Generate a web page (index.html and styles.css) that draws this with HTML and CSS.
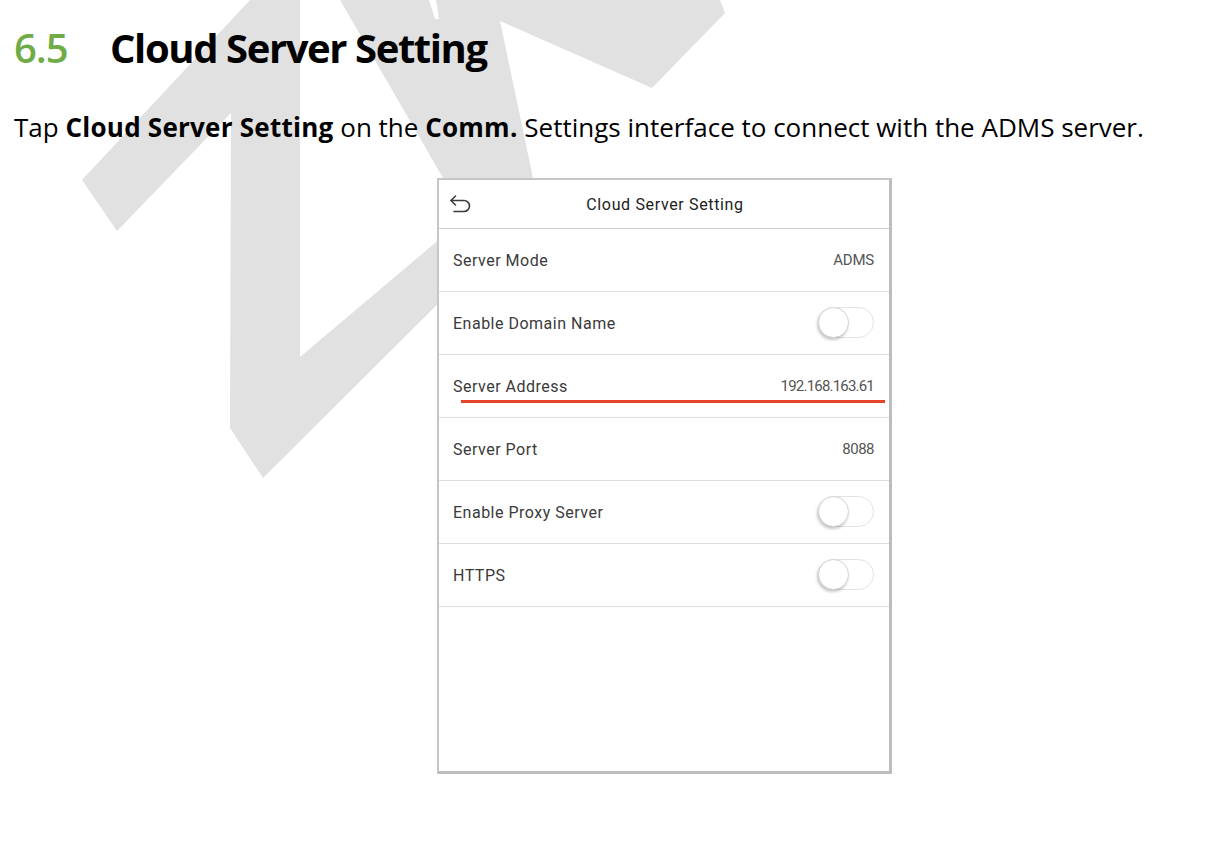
FILE: index.html
```html
<!DOCTYPE html>
<html lang="en">
<head>
<meta charset="utf-8">
<title>Cloud Server Setting</title>
<link rel="stylesheet" href="styles.css">
</head>
<body>
<svg class="watermark" width="1226" height="846" viewBox="0 0 1226 846" aria-hidden="true">
  <polygon points="250,0 300,0 300,357 480,205 480,262 263,478 230,428 231,113 117,231 82,180" />
  <polygon points="340,0 720,0 725,13 652,88 500,21 533,178 443,178" />
  <polygon class="gap" points="429,0 436,0 439,19 435,19" />
</svg>
<main class="doc">
  <h1 class="title"><span class="num">6.5</span><span class="name">Cloud Server Setting</span></h1>
  <p class="lead">Tap <b>Cloud Server Setting</b> on the <b>Comm.</b> Settings interface to connect with the ADMS server.</p>
  <section class="phone">
    <header class="bar">
      <svg class="back" width="26" height="22" viewBox="0 0 26 22" aria-hidden="true">
        <path d="M4 7.5 H17 A5.5 5.5 0 0 1 17 18.5 H7" />
        <path d="M8.5 3 L4 7.5 L8.5 12" />
      </svg>
      <span class="bar-title">Cloud Server Setting</span>
      <span></span>
    </header>
    <div class="row"><span class="label">Server Mode</span><span class="value">ADMS</span></div>
    <div class="row"><span class="label">Enable Domain Name</span><span class="toggle"></span></div>
    <div class="row"><span class="label">Server Address</span><span class="value ip">192.168.163.61</span><span class="mark"></span></div>
    <div class="row"><span class="label">Server Port</span><span class="value num-v">8088</span></div>
    <div class="row"><span class="label">Enable Proxy Server</span><span class="toggle"></span></div>
    <div class="row"><span class="label">HTTPS</span><span class="toggle"></span></div>
    <div class="blank"></div>
  </section>
</main>
</body>
</html>
```
FILE: styles.css
```css
html, body {
  margin: 0;
  padding: 0;
  background: #ffffff;
}

body {
  position: relative;
  width: 1226px;
  height: 846px;
  overflow: hidden;
  font-family: "Open Sans", "Noto Sans", sans-serif;
  color: #000;
}

.watermark {
  position: absolute;
  left: 0;
  top: 0;
  z-index: 0;
}

.watermark polygon {
  fill: #e1e1e1;
}

.watermark .gap {
  fill: #ffffff;
}

.doc {
  position: relative;
  z-index: 1;
  padding: 0 0 0 14px;
}

.title {
  margin: 0;
  padding-top: 20px;
  font-size: 40px;
  line-height: 56px;
  display: flex;
}

.title .num {
  width: 96px;
  color: #6fac46;
  font-weight: 600;
  letter-spacing: -1px;
}

.title .name {
  font-weight: 700;
  letter-spacing: -1.4px;
}

.lead {
  margin: 34px 0 0 0;
  font-size: 26px;
  line-height: 34px;
  letter-spacing: 0;
  white-space: nowrap;
}

.lead b {
  font-weight: 700;
  letter-spacing: 0.25px;
}

.phone {
  margin: 34px 0 0 423px;
  width: 450px;
  border-style: solid;
  border-color: #c6c6c6 #bdbdbd #bdbdbd #c6c6c6;
  border-width: 2px 3px 3px 2px;
  background: #fff;
  font-family: Roboto, "Liberation Sans", sans-serif;
  color: #333;
}

.bar {
  height: 48px;
  border-bottom: 1px solid #cfcfcf;
  display: grid;
  grid-template-columns: 1fr auto 1fr;
  align-items: center;
  padding: 0 0 0 8px;
}

.back {
  display: block;
}

.back path {
  fill: none;
  stroke: #3c3c3c;
  stroke-width: 1.6;
  stroke-linecap: round;
  stroke-linejoin: round;
}

.bar-title {
  font-size: 16px;
  letter-spacing: 0.65px;
  color: #222;
  margin-right: 6px;
}

.row {
  position: relative;
  height: 62px;
  border-bottom: 1px solid #dedede;
  display: flex;
  align-items: center;
  justify-content: space-between;
  padding: 0 15px 0 14px;
}

.label {
  font-size: 16px;
  letter-spacing: 0.5px;
  color: #3a3a3a;
}

.value {
  font-size: 15px;
  color: #555;
  letter-spacing: -0.2px;
}

.value.ip {
  letter-spacing: -0.8px;
}

.value.num-v {
  letter-spacing: -0.5px;
}

.toggle {
  position: relative;
  width: 56px;
  height: 31px;
  border: 1px solid #e3e3e3;
  border-radius: 17px;
  box-sizing: border-box;
  background: #fff;
  margin-top: -2px;
}

.toggle::before {
  content: "";
  position: absolute;
  left: -1px;
  top: -1px;
  width: 31px;
  height: 31px;
  border-radius: 50%;
  background: #fff;
  border: 1px solid #d4d4d4;
  box-sizing: border-box;
  box-shadow: -1px 2px 3px rgba(0, 0, 0, 0.22);
}

.mark {
  position: absolute;
  left: 22px;
  top: 45px;
  width: 424px;
  height: 3px;
  background: #e5432a;
}

.blank {
  height: 164px;
}
```
